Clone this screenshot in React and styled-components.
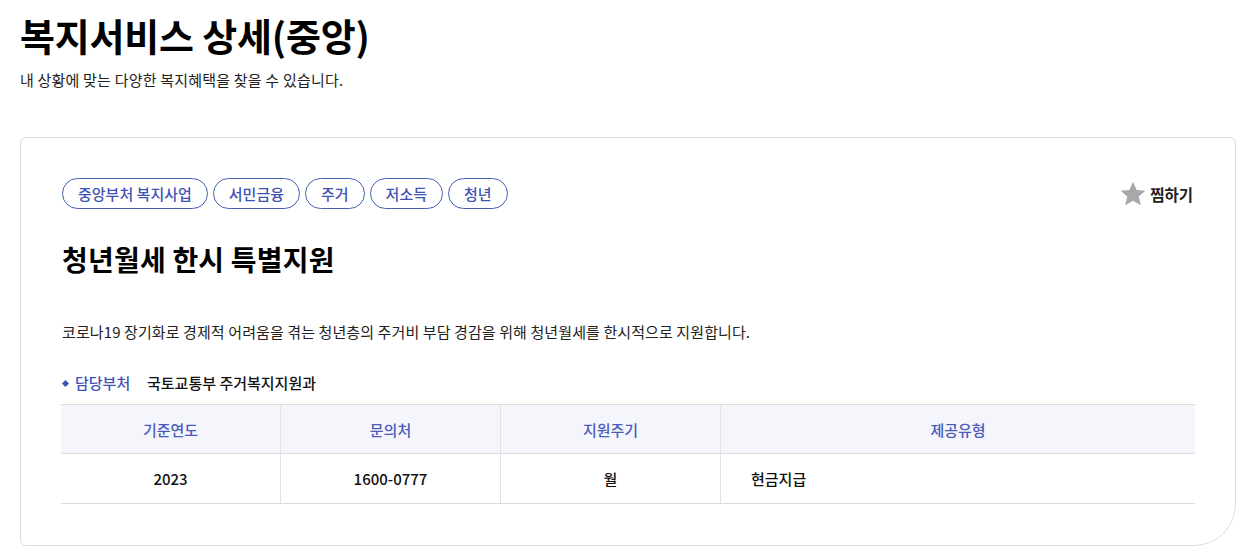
import React from 'react';
import styled, { createGlobalStyle } from 'styled-components';

const GlobalStyle = createGlobalStyle`
  body {
    margin: 0;
    background: #fff;
    font-family: "Noto Sans CJK KR", "Noto Sans", sans-serif;
    color: #111;
  }
`;

const tags = ['중앙부처 복지사업', '서민금융', '주거', '저소득', '청년'];

const columns = [
  { label: '기준연도', value: '2023' },
  { label: '문의처', value: '1600-0777' },
  { label: '지원주기', value: '월' },
  { label: '제공유형', value: '현금지급', wide: true }
];

const Page = styled.div`
  padding: 9px 21px 12px 20px;
`;

const Heading = styled.h1`
  margin: 0;
  font-size: 38px;
  font-weight: 700;
  letter-spacing: -0.2px;
  line-height: 52px;
  color: #000;
`;

const Lead = styled.p`
  margin: 7px 0 0;
  font-size: 15px;
  line-height: 24px;
  letter-spacing: 0.2px;
  color: #222;
`;

const Card = styled.section`
  margin-top: 45px;
  border: 1px solid #dcdcdc;
  border-radius: 6px 6px 42px 6px;
  padding: 40px 40px 41px;
`;

const TopRow = styled.div`
  display: flex;
  align-items: center;
  justify-content: space-between;
  padding-left: 1px;
`;

const TagList = styled.div`
  display: flex;
  gap: 5px;
`;

const Tag = styled.span`
  display: inline-flex;
  align-items: center;
  height: 31px;
  padding: 0 15px;
  box-sizing: border-box;
  border: 1px solid #4560b3;
  border-radius: 16px;
  color: #3f52b4;
  font-size: 15px;
  font-weight: 500;
`;

const Bookmark = styled.button`
  display: flex;
  align-items: center;
  gap: 3px;
  border: 0;
  background: none;
  padding: 0 2px 0 0;
  font-family: inherit;
  font-size: 15.5px;
  font-weight: 700;
  color: #222;
  cursor: pointer;
`;

const Title = styled.h2`
  margin: 30px 0 0;
  padding-left: 1px;
  font-size: 28px;
  font-weight: 700;
  line-height: 40px;
  letter-spacing: 0.2px;
  color: #000;
`;

const Description = styled.p`
  margin: 41px 0 0;
  padding-left: 1px;
  font-size: 15px;
  line-height: 24px;
  letter-spacing: 0.1px;
  color: #222;
`;

const Dept = styled.div`
  display: flex;
  align-items: center;
  margin-top: 27px;
  padding-left: 2px;
  font-size: 15px;
  line-height: 24px;
`;

const DeptLabel = styled.span`
  display: flex;
  align-items: center;
  gap: 7px;
  color: #3f52b4;
  font-weight: 500;
  width: 84px;
  &::before {
    content: '';
    width: 5px;
    height: 5px;
    background: #3f52b4;
    transform: rotate(45deg);
  }
`;

const DeptValue = styled.span`
  font-weight: 500;
  color: #111;
`;

const Table = styled.div`
  display: grid;
  grid-template-columns: 219px 220px 220px 1fr;
  margin-top: 9px;
  border-top: 1px solid #dcdcdc;
`;

const Cell = styled.div`
  height: ${p => (p.$head ? '48px' : '49px')};
  display: flex;
  align-items: center;
  justify-content: ${p => (p.$left ? 'flex-start' : 'center')};
  padding-left: ${p => (p.$left ? '30px' : '0')};
  border-bottom: 1px solid #dcdcdc;
  border-left: ${p => (p.$first ? '0' : '1px solid #e2e2e2')};
  font-size: 15px;
`;

const HeadCell = styled(Cell)`
  background: #f4f6fb;
  color: #4a5bbd;
  font-weight: 500;
`;

const BodyCell = styled(Cell)`
  color: #111;
  font-weight: 500;
`;

const Star = () => (
  <svg width="28" height="28" viewBox="0 0 24 24">
    <path
      fill="#a8a8a8"
      d="M12 1.6l3.1 7 7.5.6-5.7 5 1.8 7.5L12 17.8l-6.7 3.9 1.8-7.5-5.7-5 7.5-.6z"
    />
  </svg>
);

export default function App() {
  return (
    <Page>
      <GlobalStyle />
      <Heading>복지서비스 상세(중앙)</Heading>
      <Lead>내 상황에 맞는 다양한 복지혜택을 찾을 수 있습니다.</Lead>

      <Card>
        <TopRow>
          <TagList>
            {tags.map(tag => (
              <Tag key={tag}>{tag}</Tag>
            ))}
          </TagList>
          <Bookmark>
            <Star />
            찜하기
          </Bookmark>
        </TopRow>

        <Title>청년월세 한시 특별지원</Title>

        <Description>
          코로나19 장기화로 경제적 어려움을 겪는 청년층의 주거비 부담 경감을 위해 청년월세를 한시적으로 지원합니다.
        </Description>

        <Dept>
          <DeptLabel>담당부처</DeptLabel>
          <DeptValue>국토교통부 주거복지지원과</DeptValue>
        </Dept>

        <Table>
          {columns.map((col, i) => (
            <HeadCell key={col.label} $head $first={i === 0}>
              {col.label}
            </HeadCell>
          ))}
          {columns.map((col, i) => (
            <BodyCell key={col.label + '-v'} $first={i === 0} $left={col.wide}>
              {col.value}
            </BodyCell>
          ))}
        </Table>
      </Card>
    </Page>
  );
}
